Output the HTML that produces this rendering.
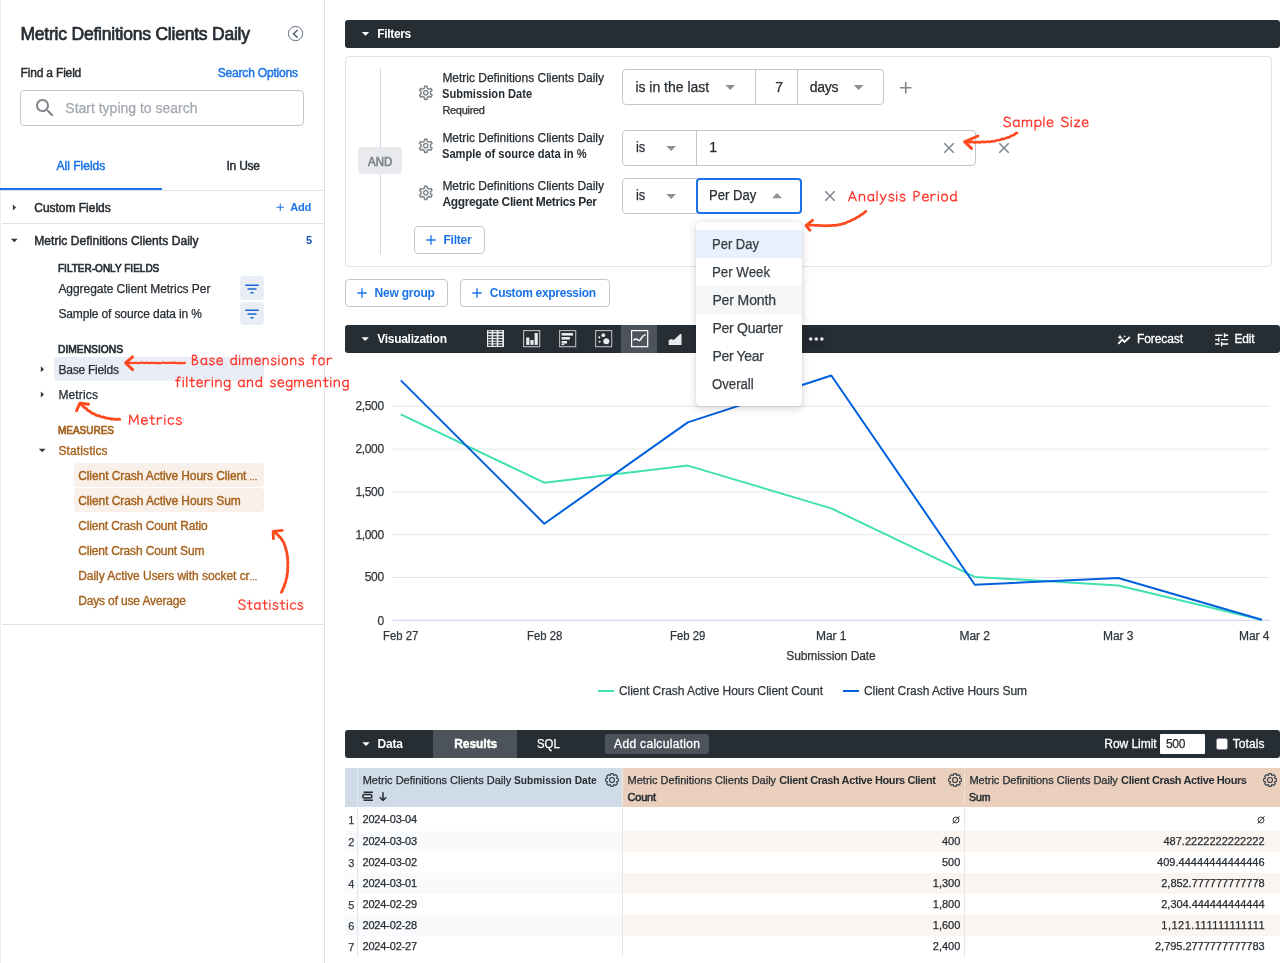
<!DOCTYPE html>
<html><head><meta charset="utf-8"><title>Explore</title>
<style>
html,body{margin:0;padding:0;}
body{width:1288px;height:963px;position:relative;overflow:hidden;background:#fff;
font-family:"Liberation Sans",sans-serif;color:#262d33;}
#root{position:absolute;left:0;top:0;width:1288px;height:963px;will-change:transform;}
.a{position:absolute;display:block;}
.t{position:absolute;white-space:nowrap;display:block;}
b{font-weight:700;}
</style></head>
<body>
<div id="root">
<div class="a" style="left:324px;top:0px;width:1px;height:963px;background:#dee1e5;"></div>
<div class="a" style="left:0px;top:0px;width:1px;height:963px;background:#eff0f2;"></div>
<span class="t" id="t1" style="top:22px;font-size:17.5px;line-height:24px;color:#262d33;-webkit-text-stroke:0.7px #262d33;left:20.50px;letter-spacing:-0.220px;">Metric Definitions Clients Daily</span>
<svg class="a" style="left:286px;top:24px;" width="20" height="20" viewBox="0 0 20 20"><circle cx="9.55" cy="9.5" r="7.1" fill="none" stroke="#5f6b7a" stroke-width="1"/><path d="M11.6 6.0 L7.5 9.8 L11.6 13.6" fill="none" stroke="#5f6b7a" stroke-width="1.6"/></svg>
<span class="t" id="t2" style="top:65px;font-size:12px;line-height:16px;color:#262d33;-webkit-text-stroke:0.45px #262d33;left:20.50px;letter-spacing:-0.173px;">Find a Field</span>
<span class="t" id="t3" style="top:65px;font-size:12px;line-height:16px;color:#1a73e8;-webkit-text-stroke:0.45px #1a73e8;left:217.80px;letter-spacing:-0.194px;">Search Options</span>
<div class="a" style="left:20px;top:90px;width:284px;height:36px;border:1px solid #c1c6cc;box-sizing:border-box;border-radius:4px;"></div>
<svg class="a" style="left:32.80px;top:96.10px;" width="24" height="24" viewBox="0 0 24 24"><path fill="#80868b" d="M15.5 14h-.79l-.28-.27C15.41 12.59 16 11.11 16 9.5 16 5.91 13.09 3 9.5 3S3 5.91 3 9.5 5.91 16 9.5 16c1.61 0 3.09-.59 4.23-1.57l.27.28v.79l5 4.99L20.49 19l-4.99-5zm-6 0C7.01 14 5 11.99 5 9.5S7.01 5 9.5 5 14 7.01 14 9.5 11.99 14 9.5 14z"/></svg>
<span class="t" id="t4" style="top:98px;font-size:14px;line-height:20px;color:#a3a8ae;-webkit-text-stroke:0.25px #a3a8ae;left:65.30px;letter-spacing:-0.005px;">Start typing to search</span>
<span class="t" id="t5" style="top:158px;font-size:12px;line-height:16px;color:#1a73e8;-webkit-text-stroke:0.45px #1a73e8;left:56.50px;letter-spacing:0.012px;">All Fields</span>
<span class="t" id="t6" style="top:158px;font-size:12px;line-height:16px;color:#262d33;-webkit-text-stroke:0.45px #262d33;left:226.50px;letter-spacing:-0.237px;">In Use</span>
<div class="a" style="left:0px;top:189.5px;width:324px;height:1.0px;background:#dee1e5;"></div>
<div class="a" style="left:0px;top:188px;width:162px;height:2.3000000000000114px;background:#1a73e8;"></div>
<svg class="a" style="left:0;top:0" width="1288" height="963"><polygon fill="#343c42" points="12.9,204.6 12.9,210.6 16.1,207.6"/></svg>
<span class="t" id="t7" style="top:200px;font-size:12px;line-height:16px;color:#262d33;-webkit-text-stroke:0.5px #262d33;left:34.30px;letter-spacing:-0.024px;">Custom Fields</span>
<svg class="a" style="left:273.55px;top:201.35px;" width="12.5" height="12.5" viewBox="0 0 24 24"><path fill="#1a73e8" d="M19 13h-6v6h-2v-6H5v-2h6V5h2v6h6v2z"/></svg>
<span class="t" id="t8" style="top:200px;font-size:11px;line-height:14px;color:#1a73e8;font-weight:700;left:290.30px;letter-spacing:-0.245px;">Add</span>
<div class="a" style="left:2px;top:223px;width:322px;height:1px;background:#dee1e5;"></div>
<svg class="a" style="left:0;top:0" width="1288" height="963"><polygon fill="#343c42" points="10.8,238.65 17.8,238.65 14.3,242.15"/></svg>
<span class="t" id="t9" style="top:233px;font-size:12px;line-height:16px;color:#262d33;-webkit-text-stroke:0.5px #262d33;left:34.30px;letter-spacing:0.073px;">Metric Definitions Clients Daily</span>
<span class="t" id="t10" style="top:233px;font-size:11px;line-height:14px;color:#1558b8;font-weight:700;left:305.94px;">5</span>
<span class="t" id="t11" style="top:261px;font-size:11px;line-height:14px;color:#262d33;-webkit-text-stroke:0.7px #262d33;left:58.40px;transform:scaleX(0.9106);transform-origin:0 0;">FILTER-ONLY FIELDS</span>
<span class="t" id="t12" style="top:281px;font-size:12px;line-height:16px;color:#262d33;-webkit-text-stroke:0.25px #262d33;left:58.40px;letter-spacing:-0.052px;">Aggregate Client Metrics Per</span>
<div class="a" style="left:240px;top:276.4px;width:24px;height:23.400000000000034px;background:#e9edf5;border-radius:4px;"></div>
<svg class="a" style="left:243.00px;top:279.50px;" width="18" height="18" viewBox="0 0 24 24"><path fill="#1967d2" d="M10 18h4v-2h-4v2zM3 6v2h18V6H3zm3 7h12v-2H6v2z"/></svg>
<span class="t" id="t13" style="top:306px;font-size:12px;line-height:16px;color:#262d33;-webkit-text-stroke:0.25px #262d33;left:58.40px;letter-spacing:-0.126px;">Sample of source data in %</span>
<div class="a" style="left:240px;top:301.6px;width:24px;height:23.399999999999977px;background:#e9edf5;border-radius:4px;"></div>
<svg class="a" style="left:243.00px;top:304.50px;" width="18" height="18" viewBox="0 0 24 24"><path fill="#1967d2" d="M10 18h4v-2h-4v2zM3 6v2h18V6H3zm3 7h12v-2H6v2z"/></svg>
<span class="t" id="t14" style="top:342px;font-size:11px;line-height:14px;color:#262d33;-webkit-text-stroke:0.7px #262d33;left:58.40px;transform:scaleX(0.9327);transform-origin:0 0;">DIMENSIONS</span>
<div class="a" style="left:54px;top:357.4px;width:210px;height:23.600000000000023px;background:#e9edf5;border-radius:4px;"></div>
<svg class="a" style="left:0;top:0" width="1288" height="963"><polygon fill="#343c42" points="40.8,366.3 40.8,372.3 44.0,369.3"/></svg>
<span class="t" id="t15" style="top:362px;font-size:12px;line-height:16px;color:#262d33;-webkit-text-stroke:0.25px #262d33;left:58.40px;letter-spacing:-0.220px;">Base Fields</span>
<svg class="a" style="left:0;top:0" width="1288" height="963"><polygon fill="#343c42" points="40.8,391.4 40.8,397.4 44.0,394.4"/></svg>
<span class="t" id="t16" style="top:387px;font-size:12px;line-height:16px;color:#262d33;-webkit-text-stroke:0.25px #262d33;left:58.40px;letter-spacing:0.155px;">Metrics</span>
<span class="t" id="t17" style="top:423px;font-size:11px;line-height:14px;color:#a5611c;-webkit-text-stroke:0.7px #a5611c;left:58.40px;transform:scaleX(0.9069);transform-origin:0 0;">MEASURES</span>
<svg class="a" style="left:0;top:0" width="1288" height="963"><polygon fill="#343c42" points="38.7,448.85 45.7,448.85 42.2,452.35"/></svg>
<span class="t" id="t18" style="top:443px;font-size:12px;line-height:16px;color:#a5611c;-webkit-text-stroke:0.35px #a5611c;left:58.40px;letter-spacing:0.132px;">Statistics</span>
<div class="a" style="left:74px;top:463.3px;width:190px;height:23.30000000000001px;background:#f9f0e9;border-radius:4px;"></div>
<div class="a" style="left:74px;top:488.2px;width:190px;height:23.400000000000034px;background:#f9f0e9;border-radius:4px;"></div>
<span class="t" id="t19" style="top:468px;font-size:12px;line-height:16px;color:#a5611c;-webkit-text-stroke:0.4px #a5611c;left:78.20px;letter-spacing:-0.081px;">Client Crash Active Hours Client <span style="font-size:8px">…</span></span>
<span class="t" id="t20" style="top:493px;font-size:12px;line-height:16px;color:#a5611c;-webkit-text-stroke:0.4px #a5611c;left:78.20px;letter-spacing:-0.076px;">Client Crash Active Hours Sum</span>
<span class="t" id="t21" style="top:518px;font-size:12px;line-height:16px;color:#a5611c;-webkit-text-stroke:0.35px #a5611c;left:78.20px;letter-spacing:-0.145px;">Client Crash Count Ratio</span>
<span class="t" id="t22" style="top:543px;font-size:12px;line-height:16px;color:#a5611c;-webkit-text-stroke:0.35px #a5611c;left:78.20px;letter-spacing:-0.147px;">Client Crash Count Sum</span>
<span class="t" id="t23" style="top:568px;font-size:12px;line-height:16px;color:#a5611c;-webkit-text-stroke:0.35px #a5611c;left:78.20px;letter-spacing:-0.040px;">Daily Active Users with socket cr<span style="font-size:8px">…</span></span>
<span class="t" id="t24" style="top:593px;font-size:12px;line-height:16px;color:#a5611c;-webkit-text-stroke:0.35px #a5611c;left:78.20px;letter-spacing:-0.151px;">Days of use Average</span>
<div class="a" style="left:2px;top:624px;width:322px;height:1px;background:#dee1e5;"></div>
<div class="a" style="left:345px;top:20px;width:935px;height:28px;background:#262d33;border-radius:3px;"></div>
<svg class="a" style="left:0;top:0" width="1288" height="963"><polygon fill="#fff" points="361.8,31.9 369.2,31.9 365.5,35.699999999999996"/></svg>
<span class="t" id="t25" style="top:26px;font-size:12px;line-height:16px;color:#fff;font-weight:700;left:377.30px;letter-spacing:-0.336px;">Filters</span>
<div class="a" style="left:345px;top:56px;width:927px;height:211px;border:1px solid #e0e3e7;box-sizing:border-box;border-radius:4px;"></div>
<div class="a" style="left:380px;top:69px;width:1px;height:184.5px;background:#d5d9de;"></div>
<div class="a" style="left:358.4px;top:147.3px;width:43.200000000000045px;height:27.099999999999994px;background:#e8eaed;border-radius:4px;"></div>
<span class="t" id="t26" style="top:154px;font-size:12px;line-height:16px;color:#80868b;-webkit-text-stroke:0.7px #80868b;left:368.00px;transform:scaleX(0.9549);transform-origin:0 0;">AND</span>
<svg class="a" style="left:417.00px;top:84.00px;" width="17.6" height="17.6" viewBox="0 0 24 24"><path fill="#80868b" d="M19.43 12.98c.04-.32.07-.64.07-.98 0-.34-.03-.66-.07-.98l2.11-1.65c.19-.15.24-.42.12-.64l-2-3.46c-.09-.16-.26-.25-.44-.25-.06 0-.12.01-.17.03l-2.49 1c-.52-.4-1.08-.73-1.69-.98l-.38-2.65C14.46 2.18 14.25 2 14 2h-4c-.25 0-.46.18-.49.42l-.38 2.65c-.61.25-1.17.59-1.69.98l-2.49-1c-.06-.02-.12-.03-.18-.03-.17 0-.34.09-.43.25l-2 3.46c-.13.22-.07.49.12.64l2.11 1.65c-.04.32-.07.65-.07.98 0 .33.03.66.07.98l-2.11 1.65c-.19.15-.24.42-.12.64l2 3.46c.09.16.26.25.44.25.06 0 .12-.01.17-.03l2.49-1c.52.4 1.08.73 1.69.98l.38 2.65c.03.24.24.42.49.42h4c.25 0 .46-.18.49-.42l.38-2.65c.61-.25 1.17-.59 1.69-.98l2.49 1c.06.02.12.03.18.03.17 0 .34-.09.43-.25l2-3.46c.12-.22.07-.49-.12-.64l-2.11-1.65zm-1.98-1.71c.04.31.05.52.05.73 0 .21-.02.43-.05.73l-.14 1.13.89.7 1.08.84-.7 1.21-1.27-.51-1.04-.42-.9.68c-.43.32-.84.56-1.25.73l-1.06.43-.16 1.13-.2 1.35h-1.4l-.19-1.35-.16-1.13-1.06-.43c-.43-.18-.83-.41-1.23-.71l-.91-.7-1.06.43-1.27.51-.7-1.21 1.08-.84.89-.7-.14-1.13c-.03-.31-.05-.54-.05-.74s.02-.43.05-.73l.14-1.13-.89-.7-1.08-.84.7-1.21 1.27.51 1.04.42.9-.68c.43-.32.84-.56 1.25-.73l1.06-.43.16-1.13.2-1.35h1.39l.19 1.35.16 1.13 1.06.43c.43.18.83.41 1.23.71l.91.7 1.06-.43 1.27-.51.7 1.21-1.07.85-.89.7.14 1.13zM12 8c-2.21 0-4 1.79-4 4s1.79 4 4 4 4-1.79 4-4-1.79-4-4-4zm0 6c-1.1 0-2-.9-2-2s.9-2 2-2 2 .9 2 2-.9 2-2 2z"/></svg>
<span class="t" id="t27" style="top:70px;font-size:12px;line-height:16px;color:#262d33;-webkit-text-stroke:0.25px #262d33;left:442.40px;letter-spacing:-0.014px;">Metric Definitions Clients Daily</span>
<span class="t" id="t28" style="top:86px;font-size:12px;line-height:16px;color:#262d33;font-weight:700;left:442.40px;transform:scaleX(0.9254);transform-origin:0 0;">Submission Date</span>
<span class="t" id="t29" style="top:103px;font-size:11px;line-height:14px;color:#262d33;-webkit-text-stroke:0.25px #262d33;left:442.40px;letter-spacing:-0.292px;">Required</span>
<div class="a" style="left:622px;top:69px;width:262px;height:36px;border:1px solid #c1c6cc;box-sizing:border-box;border-radius:4px;"></div>
<div class="a" style="left:755px;top:69px;width:1px;height:36px;background:#c1c6cc;"></div>
<div class="a" style="left:797px;top:69px;width:1px;height:36px;background:#c1c6cc;"></div>
<span class="t" id="t30" style="top:77px;font-size:14px;line-height:20px;color:#262d33;-webkit-text-stroke:0.25px #262d33;left:635.40px;letter-spacing:-0.011px;">is in the last</span>
<svg class="a" style="left:0;top:0" width="1288" height="963"><polygon fill="#8b9196" points="725.3000000000001,84.9 735.1,84.9 730.2,90.1"/></svg>
<span class="t" id="t31" style="top:77px;font-size:14px;line-height:20px;color:#262d33;-webkit-text-stroke:0.25px #262d33;left:775.30px;">7</span>
<span class="t" id="t32" style="top:77px;font-size:14px;line-height:20px;color:#262d33;-webkit-text-stroke:0.25px #262d33;left:809.80px;letter-spacing:-0.293px;">days</span>
<svg class="a" style="left:0;top:0" width="1288" height="963"><polygon fill="#8b9196" points="853.7,84.9 863.5,84.9 858.6,90.1"/></svg>
<svg class="a" style="left:896.15px;top:78.35px;" width="19.5" height="19.5" viewBox="0 0 24 24"><path fill="#80868b" d="M19 13h-6v6h-2v-6H5v-2h6V5h2v6h6v2z"/></svg>
<svg class="a" style="left:417.00px;top:136.70px;" width="17.6" height="17.6" viewBox="0 0 24 24"><path fill="#80868b" d="M19.43 12.98c.04-.32.07-.64.07-.98 0-.34-.03-.66-.07-.98l2.11-1.65c.19-.15.24-.42.12-.64l-2-3.46c-.09-.16-.26-.25-.44-.25-.06 0-.12.01-.17.03l-2.49 1c-.52-.4-1.08-.73-1.69-.98l-.38-2.65C14.46 2.18 14.25 2 14 2h-4c-.25 0-.46.18-.49.42l-.38 2.65c-.61.25-1.17.59-1.69.98l-2.49-1c-.06-.02-.12-.03-.18-.03-.17 0-.34.09-.43.25l-2 3.46c-.13.22-.07.49.12.64l2.11 1.65c-.04.32-.07.65-.07.98 0 .33.03.66.07.98l-2.11 1.65c-.19.15-.24.42-.12.64l2 3.46c.09.16.26.25.44.25.06 0 .12-.01.17-.03l2.49-1c.52.4 1.08.73 1.69.98l.38 2.65c.03.24.24.42.49.42h4c.25 0 .46-.18.49-.42l.38-2.65c.61-.25 1.17-.59 1.69-.98l2.49 1c.06.02.12.03.18.03.17 0 .34-.09.43-.25l2-3.46c.12-.22.07-.49-.12-.64l-2.11-1.65zm-1.98-1.71c.04.31.05.52.05.73 0 .21-.02.43-.05.73l-.14 1.13.89.7 1.08.84-.7 1.21-1.27-.51-1.04-.42-.9.68c-.43.32-.84.56-1.25.73l-1.06.43-.16 1.13-.2 1.35h-1.4l-.19-1.35-.16-1.13-1.06-.43c-.43-.18-.83-.41-1.23-.71l-.91-.7-1.06.43-1.27.51-.7-1.21 1.08-.84.89-.7-.14-1.13c-.03-.31-.05-.54-.05-.74s.02-.43.05-.73l.14-1.13-.89-.7-1.08-.84.7-1.21 1.27.51 1.04.42.9-.68c.43-.32.84-.56 1.25-.73l1.06-.43.16-1.13.2-1.35h1.39l.19 1.35.16 1.13 1.06.43c.43.18.83.41 1.23.71l.91.7 1.06-.43 1.27-.51.7 1.21-1.07.85-.89.7.14 1.13zM12 8c-2.21 0-4 1.79-4 4s1.79 4 4 4 4-1.79 4-4-1.79-4-4-4zm0 6c-1.1 0-2-.9-2-2s.9-2 2-2 2 .9 2 2-.9 2-2 2z"/></svg>
<span class="t" id="t33" style="top:130px;font-size:12px;line-height:16px;color:#262d33;-webkit-text-stroke:0.25px #262d33;left:442.40px;letter-spacing:-0.014px;">Metric Definitions Clients Daily</span>
<span class="t" id="t34" style="top:146px;font-size:12px;line-height:16px;color:#262d33;font-weight:700;left:442.40px;transform:scaleX(0.9266);transform-origin:0 0;">Sample of source data in %</span>
<div class="a" style="left:622px;top:130px;width:354px;height:36px;border:1px solid #c1c6cc;box-sizing:border-box;border-radius:4px;"></div>
<div class="a" style="left:696px;top:130px;width:1px;height:36px;background:#c1c6cc;"></div>
<span class="t" id="t35" style="top:137px;font-size:14px;line-height:20px;color:#262d33;-webkit-text-stroke:0.25px #262d33;left:635.80px;transform:scaleX(0.9185);transform-origin:0 0;">is</span>
<svg class="a" style="left:0;top:0" width="1288" height="963"><polygon fill="#8b9196" points="666.3000000000001,145.9 676.1,145.9 671.2,151.1"/></svg>
<span class="t" id="t36" style="top:137px;font-size:14px;line-height:20px;color:#262d33;-webkit-text-stroke:0.25px #262d33;left:709.20px;">1</span>
<svg class="a" style="left:939.90px;top:138.90px;" width="18" height="18" viewBox="0 0 24 24"><path fill="#80868b" d="M19 6.41L17.59 5 12 10.59 6.41 5 5 6.41 10.59 12 5 17.59 6.41 19 12 13.41 17.59 19 19 17.59 13.41 12z"/></svg>
<svg class="a" style="left:995.20px;top:138.90px;" width="18" height="18" viewBox="0 0 24 24"><path fill="#80868b" d="M19 6.41L17.59 5 12 10.59 6.41 5 5 6.41 10.59 12 5 17.59 6.41 19 12 13.41 17.59 19 19 17.59 13.41 12z"/></svg>
<svg class="a" style="left:417.00px;top:184.20px;" width="17.6" height="17.6" viewBox="0 0 24 24"><path fill="#80868b" d="M19.43 12.98c.04-.32.07-.64.07-.98 0-.34-.03-.66-.07-.98l2.11-1.65c.19-.15.24-.42.12-.64l-2-3.46c-.09-.16-.26-.25-.44-.25-.06 0-.12.01-.17.03l-2.49 1c-.52-.4-1.08-.73-1.69-.98l-.38-2.65C14.46 2.18 14.25 2 14 2h-4c-.25 0-.46.18-.49.42l-.38 2.65c-.61.25-1.17.59-1.69.98l-2.49-1c-.06-.02-.12-.03-.18-.03-.17 0-.34.09-.43.25l-2 3.46c-.13.22-.07.49.12.64l2.11 1.65c-.04.32-.07.65-.07.98 0 .33.03.66.07.98l-2.11 1.65c-.19.15-.24.42-.12.64l2 3.46c.09.16.26.25.44.25.06 0 .12-.01.17-.03l2.49-1c.52.4 1.08.73 1.69.98l.38 2.65c.03.24.24.42.49.42h4c.25 0 .46-.18.49-.42l.38-2.65c.61-.25 1.17-.59 1.69-.98l2.49 1c.06.02.12.03.18.03.17 0 .34-.09.43-.25l2-3.46c.12-.22.07-.49-.12-.64l-2.11-1.65zm-1.98-1.71c.04.31.05.52.05.73 0 .21-.02.43-.05.73l-.14 1.13.89.7 1.08.84-.7 1.21-1.27-.51-1.04-.42-.9.68c-.43.32-.84.56-1.25.73l-1.06.43-.16 1.13-.2 1.35h-1.4l-.19-1.35-.16-1.13-1.06-.43c-.43-.18-.83-.41-1.23-.71l-.91-.7-1.06.43-1.27.51-.7-1.21 1.08-.84.89-.7-.14-1.13c-.03-.31-.05-.54-.05-.74s.02-.43.05-.73l.14-1.13-.89-.7-1.08-.84.7-1.21 1.27.51 1.04.42.9-.68c.43-.32.84-.56 1.25-.73l1.06-.43.16-1.13.2-1.35h1.39l.19 1.35.16 1.13 1.06.43c.43.18.83.41 1.23.71l.91.7 1.06-.43 1.27-.51.7 1.21-1.07.85-.89.7.14 1.13zM12 8c-2.21 0-4 1.79-4 4s1.79 4 4 4 4-1.79 4-4-1.79-4-4-4zm0 6c-1.1 0-2-.9-2-2s.9-2 2-2 2 .9 2 2-.9 2-2 2z"/></svg>
<span class="t" id="t37" style="top:178px;font-size:12px;line-height:16px;color:#262d33;-webkit-text-stroke:0.25px #262d33;left:442.40px;letter-spacing:-0.014px;">Metric Definitions Clients Daily</span>
<span class="t" id="t38" style="top:194px;font-size:12px;line-height:16px;color:#262d33;font-weight:700;left:442.40px;letter-spacing:-0.350px;">Aggregate Client Metrics Per</span>
<div class="a" style="left:622px;top:178px;width:78px;height:36px;border:1px solid #c1c6cc;box-sizing:border-box;border-radius:4px;"></div>
<span class="t" id="t39" style="top:185px;font-size:14px;line-height:20px;color:#262d33;-webkit-text-stroke:0.25px #262d33;left:635.80px;transform:scaleX(0.9185);transform-origin:0 0;">is</span>
<svg class="a" style="left:0;top:0" width="1288" height="963"><polygon fill="#8b9196" points="666.3000000000001,193.9 676.1,193.9 671.2,199.1"/></svg>
<div class="a" style="left:696px;top:178px;width:106px;height:36px;background:#fff;border:2px solid #1a73e8;box-sizing:border-box;border-radius:4px;"></div>
<span class="t" id="t40" style="top:185px;font-size:14px;line-height:20px;color:#262d33;-webkit-text-stroke:0.25px #262d33;left:709.30px;transform:scaleX(0.9332);transform-origin:0 0;">Per Day</span>
<svg class="a" style="left:0;top:0" width="1288" height="963"><polygon fill="#8b9196" points="772.1,198.2 781.9,198.2 777,193.0"/></svg>
<svg class="a" style="left:821.00px;top:187.10px;" width="18" height="18" viewBox="0 0 24 24"><path fill="#80868b" d="M19 6.41L17.59 5 12 10.59 6.41 5 5 6.41 10.59 12 5 17.59 6.41 19 12 13.41 17.59 19 19 17.59 13.41 12z"/></svg>
<div class="a" style="left:414px;top:226px;width:71px;height:28px;border:1px solid #c1c6cc;box-sizing:border-box;border-radius:4px;"></div>
<svg class="a" style="left:423.00px;top:232.20px;" width="16" height="16" viewBox="0 0 24 24"><path fill="#1a73e8" d="M19 13h-6v6h-2v-6H5v-2h6V5h2v6h6v2z"/></svg>
<span class="t" id="t41" style="top:232px;font-size:12px;line-height:16px;color:#1a73e8;font-weight:700;left:443.40px;letter-spacing:-0.209px;">Filter</span>
<div class="a" style="left:345px;top:279px;width:103px;height:28px;border:1px solid #c1c6cc;box-sizing:border-box;border-radius:4px;"></div>
<svg class="a" style="left:353.90px;top:285.20px;" width="16" height="16" viewBox="0 0 24 24"><path fill="#1a73e8" d="M19 13h-6v6h-2v-6H5v-2h6V5h2v6h6v2z"/></svg>
<span class="t" id="t42" style="top:285px;font-size:12px;line-height:16px;color:#1a73e8;font-weight:700;left:374.50px;letter-spacing:-0.200px;">New group</span>
<div class="a" style="left:460px;top:279px;width:150px;height:28px;border:1px solid #c1c6cc;box-sizing:border-box;border-radius:4px;"></div>
<svg class="a" style="left:468.90px;top:285.20px;" width="16" height="16" viewBox="0 0 24 24"><path fill="#1a73e8" d="M19 13h-6v6h-2v-6H5v-2h6V5h2v6h6v2z"/></svg>
<span class="t" id="t43" style="top:285px;font-size:12px;line-height:16px;color:#1a73e8;font-weight:700;left:489.80px;letter-spacing:-0.317px;">Custom expression</span>
<div class="a" style="left:345px;top:325px;width:935px;height:28px;background:#262d33;border-radius:3px;"></div>
<svg class="a" style="left:0;top:0" width="1288" height="963"><polygon fill="#fff" points="361.5,337.3 368.9,337.3 365.2,341.09999999999997"/></svg>
<span class="t" id="t44" style="top:331px;font-size:12px;line-height:16px;color:#fff;font-weight:700;left:377.20px;letter-spacing:-0.278px;">Visualization</span>
<div class="a" style="left:621px;top:325px;width:36px;height:28px;background:#4c535b;"></div>
<svg class="a" style="left:487px;top:330px;" width="18" height="18" viewBox="0 0 18 18"><rect x="0" y="0" width="17" height="17" fill="#e8eaed"/><rect x="1.1" y="0.8" width="3.5" height="1.0" fill="#262d33"/><rect x="1.1" y="3.5" width="3.5" height="1.6" fill="#262d33"/><rect x="1.1" y="6.3" width="3.5" height="1.6" fill="#262d33"/><rect x="1.1" y="9.1" width="3.5" height="1.6" fill="#262d33"/><rect x="1.1" y="11.8" width="3.5" height="1.5" fill="#262d33"/><rect x="1.1" y="14.4" width="3.5" height="1.5" fill="#262d33"/><rect x="6.2" y="0.8" width="3.5" height="1.0" fill="#262d33"/><rect x="6.2" y="3.5" width="3.5" height="1.6" fill="#262d33"/><rect x="6.2" y="6.3" width="3.5" height="1.6" fill="#262d33"/><rect x="6.2" y="9.1" width="3.5" height="1.6" fill="#262d33"/><rect x="6.2" y="11.8" width="3.5" height="1.5" fill="#262d33"/><rect x="6.2" y="14.4" width="3.5" height="1.5" fill="#262d33"/><rect x="11.4" y="0.8" width="3.9" height="1.0" fill="#262d33"/><rect x="11.4" y="3.5" width="3.9" height="1.6" fill="#262d33"/><rect x="11.4" y="6.3" width="3.9" height="1.6" fill="#262d33"/><rect x="11.4" y="9.1" width="3.9" height="1.6" fill="#262d33"/><rect x="11.4" y="11.8" width="3.9" height="1.5" fill="#262d33"/><rect x="11.4" y="14.4" width="3.9" height="1.5" fill="#262d33"/></svg>
<svg class="a" style="left:522.5px;top:330px;" width="18" height="18" viewBox="0 0 18 18"><rect x="0.6" y="0.6" width="16.1" height="16.1" fill="none" stroke="#b9bdc2" stroke-width="1.1"/><rect x="3.2" y="7.5" width="3.2" height="7.4" fill="#e8eaed"/><rect x="7.4" y="10" width="3.2" height="4.9" fill="#e8eaed"/><rect x="11.6" y="3" width="3.2" height="11.9" fill="#e8eaed"/></svg>
<svg class="a" style="left:558.8px;top:330px;" width="18" height="18" viewBox="0 0 18 18"><rect x="0.6" y="0.6" width="16.1" height="16.1" fill="none" stroke="#b9bdc2" stroke-width="1.1"/><rect x="2.6" y="3.0" width="11.5" height="2.6" fill="#e8eaed"/><rect x="2.6" y="7.0" width="8.3" height="2.6" fill="#e8eaed"/><rect x="2.6" y="11.0" width="5.4" height="2.6" fill="#e8eaed"/><rect x="2.6" y="13.9" width="2.6" height="1.2" fill="#e8eaed"/></svg>
<svg class="a" style="left:594.9px;top:330px;" width="18" height="18" viewBox="0 0 18 18"><rect x="0.6" y="0.6" width="16.1" height="16.1" fill="none" stroke="#b9bdc2" stroke-width="1.1"/><circle cx="8.3" cy="5.2" r="1.9" fill="#e8eaed"/><circle cx="4.3" cy="7.4" r="1.1" fill="#e8eaed"/><circle cx="4.6" cy="11.8" r="1.0" fill="#e8eaed"/><circle cx="11.3" cy="11.2" r="3.0" fill="#e8eaed"/></svg>
<svg class="a" style="left:630.7px;top:330px;" width="18" height="18" viewBox="0 0 18 18"><rect x="0.6" y="0.6" width="16.1" height="16.1" fill="none" stroke="#fff" stroke-width="1.2"/><path d="M2.6 10.2 C4.2 8.6 5.2 8.6 6.6 9.8 C8.2 11.2 9.2 10.6 10.4 8.2 C11.6 5.8 12.8 5.2 14.6 4.6" fill="none" stroke="#fff" stroke-width="1.5"/></svg>
<svg class="a" style="left:668.4px;top:330px;" width="18" height="18" viewBox="0 0 18 18"><path d="M0.7 14.9 L0.7 10.2 L2.9 8.9 L5.8 10.0 L12.2 4.1 L13.5 4.1 L13.5 14.9 Z" fill="#e8eaed"/></svg>
<div class="a" style="left:804.5px;top:328px;width:20.5px;height:22px;background:#222930;border-radius:3px;"></div>
<svg class="a" style="left:808px;top:335px;" width="18" height="8" viewBox="0 0 18 8"><circle cx="2.7" cy="4" r="1.8" fill="#e8eaed"/><circle cx="8.3" cy="4" r="1.8" fill="#e8eaed"/><circle cx="13.9" cy="4" r="1.8" fill="#e8eaed"/></svg>
<svg class="a" style="left:1116px;top:332px;" width="16" height="16" viewBox="0 0 16 16"><path d="M2.3 11.9 L6.3 7.6 L8.5 9.9 L13.8 5.0" fill="none" stroke="#fff" stroke-width="1.8"/><path d="M4.0 2.6 L4.8 4.4 L6.6 5.2 L4.8 6.0 L4.0 7.8 L3.2 6.0 L1.4 5.2 L3.2 4.4 Z" fill="#fff"/><path d="M8.6 3.0 L9.0 4.0 L10.0 4.4 L9.0 4.8 L8.6 5.8 L8.2 4.8 L7.2 4.4 L8.2 4.0 Z" fill="#fff"/></svg>
<span class="t" id="t45" style="top:331px;font-size:12px;line-height:16px;color:#fff;-webkit-text-stroke:0.3px #fff;left:1137.00px;letter-spacing:-0.098px;">Forecast</span>
<svg class="a" style="left:1212.65px;top:330.85px;" width="17.3" height="17.3" viewBox="0 0 24 24"><path fill="#fff" d="M3 17v2h6v-2H3zM3 5v2h10V5H3zm10 16v-2h8v-2h-8v-2h-2v6h2zM7 9v2H3v2h4v2h2V9H7zm14 4v-2H11v2h10zm-6-4h2V7h4V5h-4V3h-2v6z"/></svg>
<span class="t" id="t46" style="top:331px;font-size:12px;line-height:16px;color:#fff;-webkit-text-stroke:0.3px #fff;left:1234.40px;letter-spacing:-0.163px;">Edit</span>
<svg class="a" style="left:0;top:0" width="1288" height="963"><rect x="392.3" y="577.00" width="877.7" height="1" fill="#e6e6e8"/><rect x="392.3" y="534.20" width="877.7" height="1" fill="#e6e6e8"/><rect x="392.3" y="491.40" width="877.7" height="1" fill="#e6e6e8"/><rect x="392.3" y="448.60" width="877.7" height="1" fill="#e6e6e8"/><rect x="392.3" y="405.80" width="877.7" height="1" fill="#e6e6e8"/><rect x="392.3" y="619.80" width="877.7" height="1" fill="#c6d2e8"/><polyline points="400.8,414.3 544.3,482.7 687.8,465.6 831.3,508.4 974.8,576.9 1118.3,585.5 1261.8,619.7" fill="none" stroke="#3fe1b0" stroke-width="2" stroke-linejoin="round"/><polyline points="400.8,380.4 544.3,523.7 687.8,422.4 831.3,375.5 974.8,584.7 1118.3,578.0 1261.8,619.7" fill="none" stroke="#0060e0" stroke-width="2" stroke-linejoin="round"/></svg>
<span class="t" id="t47" style="top:613px;font-size:12px;line-height:16px;color:#30363b;-webkit-text-stroke:0.25px #30363b;right:903.90px;">0</span>
<span class="t" id="t48" style="top:569px;font-size:12px;line-height:16px;color:#30363b;-webkit-text-stroke:0.25px #30363b;right:904.22px;letter-spacing:-0.316px;">500</span>
<span class="t" id="t49" style="top:527px;font-size:12px;line-height:16px;color:#30363b;-webkit-text-stroke:0.25px #30363b;right:904.23px;letter-spacing:-0.333px;">1,000</span>
<span class="t" id="t50" style="top:484px;font-size:12px;line-height:16px;color:#30363b;-webkit-text-stroke:0.25px #30363b;right:904.23px;letter-spacing:-0.333px;">1,500</span>
<span class="t" id="t51" style="top:441px;font-size:12px;line-height:16px;color:#30363b;-webkit-text-stroke:0.25px #30363b;right:904.23px;letter-spacing:-0.333px;">2,000</span>
<span class="t" id="t52" style="top:398px;font-size:12px;line-height:16px;color:#30363b;-webkit-text-stroke:0.25px #30363b;right:904.23px;letter-spacing:-0.333px;">2,500</span>
<span class="t" id="t53" style="top:628px;font-size:12px;line-height:16px;color:#30363b;-webkit-text-stroke:0.25px #30363b;left:382.12px;transform:scaleX(0.9422);transform-origin:50% 0;">Feb 27</span>
<span class="t" id="t54" style="top:628px;font-size:12px;line-height:16px;color:#30363b;-webkit-text-stroke:0.25px #30363b;left:525.62px;transform:scaleX(0.9422);transform-origin:50% 0;">Feb 28</span>
<span class="t" id="t55" style="top:628px;font-size:12px;line-height:16px;color:#30363b;-webkit-text-stroke:0.25px #30363b;left:669.12px;transform:scaleX(0.9422);transform-origin:50% 0;">Feb 29</span>
<span class="t" id="t56" style="top:628px;font-size:12px;line-height:16px;color:#30363b;-webkit-text-stroke:0.25px #30363b;left:816.05px;letter-spacing:-0.047px;">Mar 1</span>
<span class="t" id="t57" style="top:628px;font-size:12px;line-height:16px;color:#30363b;-webkit-text-stroke:0.25px #30363b;left:959.55px;letter-spacing:-0.047px;">Mar 2</span>
<span class="t" id="t58" style="top:628px;font-size:12px;line-height:16px;color:#30363b;-webkit-text-stroke:0.25px #30363b;left:1103.05px;letter-spacing:-0.047px;">Mar 3</span>
<span class="t" id="t59" style="top:628px;font-size:12px;line-height:16px;color:#30363b;-webkit-text-stroke:0.25px #30363b;right:18.55px;letter-spacing:-0.047px;">Mar 4</span>
<span class="t" id="t60" style="top:648px;font-size:12px;line-height:16px;color:#30363b;-webkit-text-stroke:0.25px #30363b;left:786.25px;letter-spacing:-0.087px;">Submission Date</span>
<div class="a" style="left:598px;top:690px;width:15.5px;height:2px;background:#3fe1b0;"></div>
<span class="t" id="t61" style="top:683px;font-size:12px;line-height:16px;color:#30363b;-webkit-text-stroke:0.25px #30363b;left:619.00px;letter-spacing:-0.057px;">Client Crash Active Hours Client Count</span>
<div class="a" style="left:843px;top:690px;width:15.5px;height:2px;background:#0060e0;"></div>
<span class="t" id="t62" style="top:683px;font-size:12px;line-height:16px;color:#30363b;-webkit-text-stroke:0.25px #30363b;left:864.00px;letter-spacing:-0.062px;">Client Crash Active Hours Sum</span>
<div class="a" style="left:345px;top:730px;width:935px;height:28px;background:#262d33;border-radius:3px;"></div>
<svg class="a" style="left:0;top:0" width="1288" height="963"><polygon fill="#fff" points="362.3,742.3000000000001 369.7,742.3000000000001 366,746.1"/></svg>
<span class="t" id="t63" style="top:736px;font-size:12px;line-height:16px;color:#fff;font-weight:700;left:377.50px;letter-spacing:-0.205px;">Data</span>
<div class="a" style="left:433px;top:730px;width:84px;height:28px;background:#4c535b;"></div>
<span class="t" id="t64" style="top:736px;font-size:12px;line-height:16px;color:#fff;font-weight:700;-webkit-text-stroke:0.4px #fff;left:454.20px;letter-spacing:-0.043px;">Results</span>
<span class="t" id="t65" style="top:736px;font-size:12px;line-height:16px;color:#fff;-webkit-text-stroke:0.25px #fff;left:536.80px;transform:scaleX(0.9452);transform-origin:0 0;">SQL</span>
<div class="a" style="left:605.3px;top:734px;width:103.70000000000005px;height:19.799999999999955px;background:#4c535b;border-radius:3px;"></div>
<span class="t" id="t66" style="top:736px;font-size:12px;line-height:16px;color:#fff;-webkit-text-stroke:0.3px #fff;left:614.10px;letter-spacing:0.322px;">Add calculation</span>
<span class="t" id="t67" style="top:736px;font-size:12px;line-height:16px;color:#fff;-webkit-text-stroke:0.3px #fff;left:1104.30px;letter-spacing:-0.048px;">Row Limit</span>
<div class="a" style="left:1160px;top:734px;width:45px;height:20px;background:#fff;border-radius:1px;"></div>
<span class="t" id="t68" style="top:736px;font-size:12px;line-height:16px;color:#262d33;-webkit-text-stroke:0.25px #262d33;left:1166.00px;letter-spacing:-0.316px;">500</span>
<div class="a" style="left:1216px;top:738px;width:12px;height:12px;background:#fff;border:1px solid #8a8796;box-sizing:border-box;border-radius:2.5px;"></div>
<span class="t" id="t69" style="top:736px;font-size:12px;line-height:16px;color:#fff;-webkit-text-stroke:0.3px #fff;left:1232.70px;letter-spacing:0.108px;">Totals</span>
<div class="a" style="left:345px;top:768px;width:12px;height:39px;background:#cfdbe7;"></div>
<div class="a" style="left:357px;top:768px;width:1px;height:39px;background:#e2e9f1;"></div>
<div class="a" style="left:358px;top:768px;width:264px;height:39px;background:#cfdbe7;"></div>
<div class="a" style="left:622px;top:768px;width:1px;height:39px;background:#efe9e6;"></div>
<div class="a" style="left:623px;top:768px;width:341px;height:39px;background:#e9cfbc;"></div>
<div class="a" style="left:964px;top:768px;width:1px;height:39px;background:#f3e3d7;"></div>
<div class="a" style="left:965px;top:768px;width:315px;height:39px;background:#e9cfbc;"></div>
<span class="t" id="t70" style="top:773px;font-size:11px;line-height:14px;color:#262d33;-webkit-text-stroke:0.25px #262d33;left:362.70px;letter-spacing:-0.002px;">Metric Definitions Clients Daily</span>
<span class="t" id="t71" style="top:773px;font-size:11px;line-height:14px;color:#262d33;font-weight:700;left:514.40px;transform:scaleX(0.9277);transform-origin:0 0;">Submission Date</span>
<span class="t" id="t72" style="top:773px;font-size:11px;line-height:14px;color:#262d33;-webkit-text-stroke:0.25px #262d33;left:627.60px;letter-spacing:-0.002px;">Metric Definitions Clients Daily</span>
<span class="t" id="t73" style="top:773px;font-size:11px;line-height:14px;color:#262d33;font-weight:700;left:779.30px;letter-spacing:-0.394px;">Client Crash Active Hours Client</span>
<span class="t" id="t74" style="top:790px;font-size:11px;line-height:14px;color:#262d33;-webkit-text-stroke:0.55px #262d33;left:627.60px;letter-spacing:-0.240px;">Count</span>
<span class="t" id="t75" style="top:773px;font-size:11px;line-height:14px;color:#262d33;-webkit-text-stroke:0.25px #262d33;left:969.40px;letter-spacing:-0.002px;">Metric Definitions Clients Daily</span>
<span class="t" id="t76" style="top:773px;font-size:11px;line-height:14px;color:#262d33;font-weight:700;left:1121.10px;letter-spacing:-0.392px;">Client Crash Active Hours</span>
<span class="t" id="t77" style="top:790px;font-size:11px;line-height:14px;color:#262d33;-webkit-text-stroke:0.55px #262d33;left:969.40px;transform:scaleX(0.9547);transform-origin:0 0;">Sum</span>
<svg class="a" style="left:602.10px;top:769.80px" width="20" height="20" viewBox="0 0 20 20"><path d="M8.37 5.27 L8.76 3.62 L11.24 3.62 L11.63 5.27 L12.19 5.51 L13.63 4.61 L15.39 6.37 L14.49 7.81 L14.73 8.37 L16.38 8.76 L16.38 11.24 L14.73 11.63 L14.49 12.19 L15.39 13.63 L13.63 15.39 L12.19 14.49 L11.63 14.73 L11.24 16.38 L8.76 16.38 L8.37 14.73 L7.81 14.49 L6.37 15.39 L4.61 13.63 L5.51 12.19 L5.27 11.63 L3.62 11.24 L3.62 8.76 L5.27 8.37 L5.51 7.81 L4.61 6.37 L6.37 4.61 L7.81 5.51 Z" fill="none" stroke="#3a444e" stroke-width="1.15" stroke-linejoin="round"/><circle cx="10" cy="10" r="2.5" fill="none" stroke="#3a444e" stroke-width="1.15"/></svg>
<svg class="a" style="left:944.50px;top:769.80px" width="20" height="20" viewBox="0 0 20 20"><path d="M8.37 5.27 L8.76 3.62 L11.24 3.62 L11.63 5.27 L12.19 5.51 L13.63 4.61 L15.39 6.37 L14.49 7.81 L14.73 8.37 L16.38 8.76 L16.38 11.24 L14.73 11.63 L14.49 12.19 L15.39 13.63 L13.63 15.39 L12.19 14.49 L11.63 14.73 L11.24 16.38 L8.76 16.38 L8.37 14.73 L7.81 14.49 L6.37 15.39 L4.61 13.63 L5.51 12.19 L5.27 11.63 L3.62 11.24 L3.62 8.76 L5.27 8.37 L5.51 7.81 L4.61 6.37 L6.37 4.61 L7.81 5.51 Z" fill="none" stroke="#3a444e" stroke-width="1.15" stroke-linejoin="round"/><circle cx="10" cy="10" r="2.5" fill="none" stroke="#3a444e" stroke-width="1.15"/></svg>
<svg class="a" style="left:1260.00px;top:769.80px" width="20" height="20" viewBox="0 0 20 20"><path d="M8.37 5.27 L8.76 3.62 L11.24 3.62 L11.63 5.27 L12.19 5.51 L13.63 4.61 L15.39 6.37 L14.49 7.81 L14.73 8.37 L16.38 8.76 L16.38 11.24 L14.73 11.63 L14.49 12.19 L15.39 13.63 L13.63 15.39 L12.19 14.49 L11.63 14.73 L11.24 16.38 L8.76 16.38 L8.37 14.73 L7.81 14.49 L6.37 15.39 L4.61 13.63 L5.51 12.19 L5.27 11.63 L3.62 11.24 L3.62 8.76 L5.27 8.37 L5.51 7.81 L4.61 6.37 L6.37 4.61 L7.81 5.51 Z" fill="none" stroke="#3a444e" stroke-width="1.15" stroke-linejoin="round"/><circle cx="10" cy="10" r="2.5" fill="none" stroke="#3a444e" stroke-width="1.15"/></svg>
<svg class="a" style="left:361px;top:790px;" width="28" height="13" viewBox="0 0 28 13"><g fill="none" stroke="#262d33" stroke-width="1.5"><path d="M2.6 2.3 H12 M2.6 10.3 H12"/><rect x="1.9" y="4.6" width="8.9" height="3.4" rx="1.2"/><path d="M22 2.2 V10.4 M18.8 7.2 L22 10.5 L25.2 7.2"/></g></svg>
<span class="t" id="t78" style="top:813px;font-size:11px;line-height:14px;color:#343c42;-webkit-text-stroke:0.25px #343c42;left:348.14px;">1</span>
<span class="t" id="t79" style="top:812px;font-size:11px;line-height:14px;color:#262d33;-webkit-text-stroke:0.25px #262d33;left:362.50px;letter-spacing:-0.187px;">2024-03-04</span>
<svg class="a" style="left:951.3px;top:814.6px;" width="10" height="10" viewBox="0 0 10 10"><circle cx="5" cy="5" r="3.0" fill="none" stroke="#30363b" stroke-width="0.95"/><path d="M1.7 8.7 L8.5 1.2" stroke="#30363b" stroke-width="0.95"/></svg>
<svg class="a" style="left:1255.7px;top:814.6px;" width="10" height="10" viewBox="0 0 10 10"><circle cx="5" cy="5" r="3.0" fill="none" stroke="#30363b" stroke-width="0.95"/><path d="M1.7 8.7 L8.5 1.2" stroke="#30363b" stroke-width="0.95"/></svg>
<div class="a" style="left:345px;top:831px;width:277px;height:21px;background:#f9fafc;"></div>
<div class="a" style="left:622px;top:831px;width:658px;height:21px;background:#faf5f1;"></div>
<span class="t" id="t80" style="top:835px;font-size:11px;line-height:14px;color:#343c42;-webkit-text-stroke:0.25px #343c42;left:348.14px;">2</span>
<span class="t" id="t81" style="top:834px;font-size:11px;line-height:14px;color:#262d33;-webkit-text-stroke:0.25px #262d33;left:362.50px;letter-spacing:-0.187px;">2024-03-03</span>
<span class="t" id="t82" style="top:834px;font-size:11px;line-height:14px;color:#262d33;-webkit-text-stroke:0.25px #262d33;right:327.70px;">400</span>
<span class="t" id="t83" style="top:834px;font-size:11px;line-height:14px;color:#262d33;-webkit-text-stroke:0.25px #262d33;right:23.38px;letter-spacing:0.015px;">487.2222222222222</span>
<span class="t" id="t84" style="top:856px;font-size:11px;line-height:14px;color:#343c42;-webkit-text-stroke:0.25px #343c42;left:348.14px;">3</span>
<span class="t" id="t85" style="top:855px;font-size:11px;line-height:14px;color:#262d33;-webkit-text-stroke:0.25px #262d33;left:362.50px;letter-spacing:-0.187px;">2024-03-02</span>
<span class="t" id="t86" style="top:855px;font-size:11px;line-height:14px;color:#262d33;-webkit-text-stroke:0.25px #262d33;right:327.70px;">500</span>
<span class="t" id="t87" style="top:855px;font-size:11px;line-height:14px;color:#262d33;-webkit-text-stroke:0.25px #262d33;right:23.37px;letter-spacing:0.032px;">409.44444444444446</span>
<div class="a" style="left:345px;top:873px;width:277px;height:21px;background:#f9fafc;"></div>
<div class="a" style="left:622px;top:873px;width:658px;height:21px;background:#faf5f1;"></div>
<span class="t" id="t88" style="top:877px;font-size:11px;line-height:14px;color:#343c42;-webkit-text-stroke:0.25px #343c42;left:348.14px;">4</span>
<span class="t" id="t89" style="top:876px;font-size:11px;line-height:14px;color:#262d33;-webkit-text-stroke:0.25px #262d33;left:362.50px;letter-spacing:-0.187px;">2024-03-01</span>
<span class="t" id="t90" style="top:876px;font-size:11px;line-height:14px;color:#262d33;-webkit-text-stroke:0.25px #262d33;right:327.70px;">1,300</span>
<span class="t" id="t91" style="top:876px;font-size:11px;line-height:14px;color:#262d33;-webkit-text-stroke:0.25px #262d33;right:23.44px;letter-spacing:-0.041px;">2,852.777777777778</span>
<span class="t" id="t92" style="top:898px;font-size:11px;line-height:14px;color:#343c42;-webkit-text-stroke:0.25px #343c42;left:348.14px;">5</span>
<span class="t" id="t93" style="top:897px;font-size:11px;line-height:14px;color:#262d33;-webkit-text-stroke:0.25px #262d33;left:362.50px;letter-spacing:-0.187px;">2024-02-29</span>
<span class="t" id="t94" style="top:897px;font-size:11px;line-height:14px;color:#262d33;-webkit-text-stroke:0.25px #262d33;right:327.70px;">1,800</span>
<span class="t" id="t95" style="top:897px;font-size:11px;line-height:14px;color:#262d33;-webkit-text-stroke:0.25px #262d33;right:23.44px;letter-spacing:-0.041px;">2,304.444444444444</span>
<div class="a" style="left:345px;top:915px;width:277px;height:21px;background:#f9fafc;"></div>
<div class="a" style="left:622px;top:915px;width:658px;height:21px;background:#faf5f1;"></div>
<span class="t" id="t96" style="top:919px;font-size:11px;line-height:14px;color:#343c42;-webkit-text-stroke:0.25px #343c42;left:348.14px;">6</span>
<span class="t" id="t97" style="top:918px;font-size:11px;line-height:14px;color:#262d33;-webkit-text-stroke:0.25px #262d33;left:362.50px;letter-spacing:-0.187px;">2024-02-28</span>
<span class="t" id="t98" style="top:918px;font-size:11px;line-height:14px;color:#262d33;-webkit-text-stroke:0.25px #262d33;right:327.70px;">1,600</span>
<span class="t" id="t99" style="top:918px;font-size:11px;line-height:14px;color:#262d33;-webkit-text-stroke:0.25px #262d33;right:22.91px;letter-spacing:0.487px;">1,121.111111111111</span>
<span class="t" id="t100" style="top:940px;font-size:11px;line-height:14px;color:#343c42;-webkit-text-stroke:0.25px #343c42;left:348.14px;">7</span>
<span class="t" id="t101" style="top:939px;font-size:11px;line-height:14px;color:#262d33;-webkit-text-stroke:0.25px #262d33;left:362.50px;letter-spacing:-0.187px;">2024-02-27</span>
<span class="t" id="t102" style="top:939px;font-size:11px;line-height:14px;color:#262d33;-webkit-text-stroke:0.25px #262d33;right:327.70px;">2,400</span>
<span class="t" id="t103" style="top:939px;font-size:11px;line-height:14px;color:#262d33;-webkit-text-stroke:0.25px #262d33;right:23.43px;letter-spacing:-0.029px;">2,795.2777777777783</span>
<div class="a" style="left:357px;top:807px;width:1px;height:150px;background:#e3e6ea;"></div>
<div class="a" style="left:622px;top:807px;width:1px;height:150px;background:#e3e6ea;"></div>
<div class="a" style="left:964px;top:807px;width:1px;height:150px;background:#ece6e1;"></div>
<div class="a" style="left:696px;top:222px;width:106px;height:183.60000000000002px;background:#fff;border-radius:4px;box-shadow:0 2px 8px rgba(0,0,0,0.18),0 0 1px rgba(0,0,0,0.25);"></div>
<div class="a" style="left:696px;top:230px;width:106px;height:27.80000000000001px;background:#e8f0fb;"></div>
<div class="a" style="left:696px;top:286px;width:106px;height:27.80000000000001px;background:#f5f6f7;"></div>
<span class="t" id="t104" style="top:234px;font-size:14px;line-height:20px;color:#343c42;-webkit-text-stroke:0.25px #343c42;left:712.40px;transform:scaleX(0.9273);transform-origin:0 0;">Per Day</span>
<span class="t" id="t105" style="top:262px;font-size:14px;line-height:20px;color:#343c42;-webkit-text-stroke:0.25px #343c42;left:712.40px;transform:scaleX(0.9491);transform-origin:0 0;">Per Week</span>
<span class="t" id="t106" style="top:290px;font-size:14px;line-height:20px;color:#343c42;-webkit-text-stroke:0.25px #343c42;left:712.40px;letter-spacing:-0.112px;">Per Month</span>
<span class="t" id="t107" style="top:318px;font-size:14px;line-height:20px;color:#343c42;-webkit-text-stroke:0.25px #343c42;left:712.40px;letter-spacing:-0.254px;">Per Quarter</span>
<span class="t" id="t108" style="top:346px;font-size:14px;line-height:20px;color:#343c42;-webkit-text-stroke:0.25px #343c42;left:712.40px;letter-spacing:-0.317px;">Per Year</span>
<span class="t" id="t109" style="top:374px;font-size:14px;line-height:20px;color:#343c42;-webkit-text-stroke:0.25px #343c42;left:712.40px;transform:scaleX(0.9400);transform-origin:0 0;">Overall</span>
<svg class="a" style="left:0;top:0" width="1288" height="963"><g fill="none" stroke="#ff3b30" stroke-linecap="round" stroke-linejoin="round"><path transform="translate(1003.40 126.55) scale(1.078 0.885)" d="M6.3 -8.9 C5.0 -11.3 0.8 -11.1 0.8 -8.0 C0.8 -5.0 6.6 -5.9 6.6 -2.6 C6.6 0.9 1.4 0.9 0.4 -1.6" vector-effect="non-scaling-stroke" stroke-width="1.35"/><path transform="translate(1012.78 126.55) scale(1.078 0.885)" d="M5.6 -5.4 C4.8 -7.9 0.5 -8.0 0.5 -3.5 C0.5 0.8 4.8 0.9 5.6 -2.4 M5.7 -7.3 L5.7 -1 Q5.8 0 6.4 -0.2" vector-effect="non-scaling-stroke" stroke-width="1.35"/><path transform="translate(1021.72 126.55) scale(1.078 0.885)" d="M0.7 -7.3 L0.7 0 M0.7 -4.8 C1.4 -7.9 4.9 -8.3 4.9 -5 L4.9 0 M4.9 -4.8 C5.6 -7.9 9.1 -8.3 9.1 -5 L9.1 0" vector-effect="non-scaling-stroke" stroke-width="1.35"/><path transform="translate(1034.33 126.55) scale(1.078 0.885)" d="M0.7 -7.3 L0.7 4 M0.7 -5 C2 -8.4 6.3 -7.9 6.3 -3.6 C6.3 0.5 2 0.9 0.7 -2.2" vector-effect="non-scaling-stroke" stroke-width="1.35"/><path transform="translate(1043.16 126.55) scale(1.078 0.885)" d="M0.7 -11 L0.7 0" vector-effect="non-scaling-stroke" stroke-width="1.35"/><path transform="translate(1046.72 126.55) scale(1.078 0.885)" d="M0.7 -3.9 L5.6 -3.9 C5.8 -8.6 0.5 -8.8 0.5 -3.6 C0.5 0.7 4.2 0.9 5.8 -1.3" vector-effect="non-scaling-stroke" stroke-width="1.35"/><path transform="translate(1061.05 126.55) scale(1.078 0.885)" d="M6.3 -8.9 C5.0 -11.3 0.8 -11.1 0.8 -8.0 C0.8 -5.0 6.6 -5.9 6.6 -2.6 C6.6 0.9 1.4 0.9 0.4 -1.6" vector-effect="non-scaling-stroke" stroke-width="1.35"/><path transform="translate(1070.43 126.55) scale(1.078 0.885)" d="M0.7 -7.2 L0.7 0 M0.7 -10.2 L0.7 -9.9" vector-effect="non-scaling-stroke" stroke-width="1.35"/><path transform="translate(1073.98 126.55) scale(1.078 0.885)" d="M0.6 -7.2 L5.2 -7.2 L0.5 -0.1 L5.4 -0.1" vector-effect="non-scaling-stroke" stroke-width="1.35"/><path transform="translate(1081.85 126.55) scale(1.078 0.885)" d="M0.7 -3.9 L5.6 -3.9 C5.8 -8.6 0.5 -8.8 0.5 -3.6 C0.5 0.7 4.2 0.9 5.8 -1.3" vector-effect="non-scaling-stroke" stroke-width="1.35"/><path transform="translate(848.20 200.85) scale(1.076 0.885)" d="M0.4 0 L3.9 -10.7 L7.4 0 M1.7 -3.5 L6.2 -3.5" vector-effect="non-scaling-stroke" stroke-width="1.35"/><path transform="translate(858.64 200.85) scale(1.076 0.885)" d="M0.7 -7.3 L0.7 0 M0.7 -4.6 C1.6 -8.0 5.5 -8.4 5.5 -4.8 L5.5 0" vector-effect="non-scaling-stroke" stroke-width="1.35"/><path transform="translate(867.36 200.85) scale(1.076 0.885)" d="M5.6 -5.4 C4.8 -7.9 0.5 -8.0 0.5 -3.5 C0.5 0.8 4.8 0.9 5.6 -2.4 M5.7 -7.3 L5.7 -1 Q5.8 0 6.4 -0.2" vector-effect="non-scaling-stroke" stroke-width="1.35"/><path transform="translate(876.29 200.85) scale(1.076 0.885)" d="M0.7 -11 L0.7 0" vector-effect="non-scaling-stroke" stroke-width="1.35"/><path transform="translate(879.84 200.85) scale(1.076 0.885)" d="M0.5 -7.3 L3.1 -0.8 M5.8 -7.3 L3.2 -0.6 C2.4 1.8 1.8 3.3 0.4 3.8" vector-effect="non-scaling-stroke" stroke-width="1.35"/><path transform="translate(888.35 200.85) scale(1.076 0.885)" d="M4.8 -6.2 C3.8 -8.0 0.8 -7.9 0.8 -5.6 C0.8 -3.4 5.0 -4.0 5.0 -1.8 C5.0 0.7 1.2 0.7 0.4 -1.2" vector-effect="non-scaling-stroke" stroke-width="1.35"/><path transform="translate(895.99 200.85) scale(1.076 0.885)" d="M0.7 -7.2 L0.7 0 M0.7 -10.2 L0.7 -9.9" vector-effect="non-scaling-stroke" stroke-width="1.35"/><path transform="translate(899.54 200.85) scale(1.076 0.885)" d="M4.8 -6.2 C3.8 -8.0 0.8 -7.9 0.8 -5.6 C0.8 -3.4 5.0 -4.0 5.0 -1.8 C5.0 0.7 1.2 0.7 0.4 -1.2" vector-effect="non-scaling-stroke" stroke-width="1.35"/><path transform="translate(913.21 200.85) scale(1.076 0.885)" d="M0.8 0 L0.8 -10.5 C7.2 -11.8 7.4 -4.4 0.8 -4.7" vector-effect="non-scaling-stroke" stroke-width="1.35"/><path transform="translate(922.14 200.85) scale(1.076 0.885)" d="M0.7 -3.9 L5.6 -3.9 C5.8 -8.6 0.5 -8.8 0.5 -3.6 C0.5 0.7 4.2 0.9 5.8 -1.3" vector-effect="non-scaling-stroke" stroke-width="1.35"/><path transform="translate(930.43 200.85) scale(1.076 0.885)" d="M0.7 -7.3 L0.7 0 M0.7 -4.4 C1.4 -7.0 3.4 -7.9 4.8 -6.9" vector-effect="non-scaling-stroke" stroke-width="1.35"/><path transform="translate(937.64 200.85) scale(1.076 0.885)" d="M0.7 -7.2 L0.7 0 M0.7 -10.2 L0.7 -9.9" vector-effect="non-scaling-stroke" stroke-width="1.35"/><path transform="translate(941.19 200.85) scale(1.076 0.885)" d="M3.1 -7.5 C-0.4 -7.5 -0.4 0.3 3.1 0.3 C6.6 0.3 6.6 -7.5 3.1 -7.5 Z" vector-effect="non-scaling-stroke" stroke-width="1.35"/><path transform="translate(949.91 200.85) scale(1.076 0.885)" d="M5.6 -5.2 C4.8 -7.8 0.5 -7.9 0.5 -3.5 C0.5 0.8 4.8 0.9 5.6 -2.4 M5.7 -11 L5.7 -1 Q5.8 0 6.4 -0.2" vector-effect="non-scaling-stroke" stroke-width="1.35"/><path transform="translate(191.70 364.65) scale(1.037 0.885)" d="M0.8 0 L0.8 -10.5 C5.6 -11.6 6.6 -6.2 1.0 -5.5 C7.8 -5.8 7.2 0.7 0.8 0" vector-effect="non-scaling-stroke" stroke-width="1.35"/><path transform="translate(200.51 364.65) scale(1.037 0.885)" d="M5.6 -5.4 C4.8 -7.9 0.5 -8.0 0.5 -3.5 C0.5 0.8 4.8 0.9 5.6 -2.4 M5.7 -7.3 L5.7 -1 Q5.8 0 6.4 -0.2" vector-effect="non-scaling-stroke" stroke-width="1.35"/><path transform="translate(209.12 364.65) scale(1.037 0.885)" d="M4.8 -6.2 C3.8 -8.0 0.8 -7.9 0.8 -5.6 C0.8 -3.4 5.0 -4.0 5.0 -1.8 C5.0 0.7 1.2 0.7 0.4 -1.2" vector-effect="non-scaling-stroke" stroke-width="1.35"/><path transform="translate(216.49 364.65) scale(1.037 0.885)" d="M0.7 -3.9 L5.6 -3.9 C5.8 -8.6 0.5 -8.8 0.5 -3.6 C0.5 0.7 4.2 0.9 5.8 -1.3" vector-effect="non-scaling-stroke" stroke-width="1.35"/><path transform="translate(230.28 364.65) scale(1.037 0.885)" d="M5.6 -5.2 C4.8 -7.8 0.5 -7.9 0.5 -3.5 C0.5 0.8 4.8 0.9 5.6 -2.4 M5.7 -11 L5.7 -1 Q5.8 0 6.4 -0.2" vector-effect="non-scaling-stroke" stroke-width="1.35"/><path transform="translate(238.89 364.65) scale(1.037 0.885)" d="M0.7 -7.2 L0.7 0 M0.7 -10.2 L0.7 -9.9" vector-effect="non-scaling-stroke" stroke-width="1.35"/><path transform="translate(242.31 364.65) scale(1.037 0.885)" d="M0.7 -7.3 L0.7 0 M0.7 -4.8 C1.4 -7.9 4.9 -8.3 4.9 -5 L4.9 0 M4.9 -4.8 C5.6 -7.9 9.1 -8.3 9.1 -5 L9.1 0" vector-effect="non-scaling-stroke" stroke-width="1.35"/><path transform="translate(254.44 364.65) scale(1.037 0.885)" d="M0.7 -3.9 L5.6 -3.9 C5.8 -8.6 0.5 -8.8 0.5 -3.6 C0.5 0.7 4.2 0.9 5.8 -1.3" vector-effect="non-scaling-stroke" stroke-width="1.35"/><path transform="translate(262.43 364.65) scale(1.037 0.885)" d="M0.7 -7.3 L0.7 0 M0.7 -4.6 C1.6 -8.0 5.5 -8.4 5.5 -4.8 L5.5 0" vector-effect="non-scaling-stroke" stroke-width="1.35"/><path transform="translate(270.83 364.65) scale(1.037 0.885)" d="M4.8 -6.2 C3.8 -8.0 0.8 -7.9 0.8 -5.6 C0.8 -3.4 5.0 -4.0 5.0 -1.8 C5.0 0.7 1.2 0.7 0.4 -1.2" vector-effect="non-scaling-stroke" stroke-width="1.35"/><path transform="translate(278.19 364.65) scale(1.037 0.885)" d="M0.7 -7.2 L0.7 0 M0.7 -10.2 L0.7 -9.9" vector-effect="non-scaling-stroke" stroke-width="1.35"/><path transform="translate(281.61 364.65) scale(1.037 0.885)" d="M3.1 -7.5 C-0.4 -7.5 -0.4 0.3 3.1 0.3 C6.6 0.3 6.6 -7.5 3.1 -7.5 Z" vector-effect="non-scaling-stroke" stroke-width="1.35"/><path transform="translate(290.01 364.65) scale(1.037 0.885)" d="M0.7 -7.3 L0.7 0 M0.7 -4.6 C1.6 -8.0 5.5 -8.4 5.5 -4.8 L5.5 0" vector-effect="non-scaling-stroke" stroke-width="1.35"/><path transform="translate(298.41 364.65) scale(1.037 0.885)" d="M4.8 -6.2 C3.8 -8.0 0.8 -7.9 0.8 -5.6 C0.8 -3.4 5.0 -4.0 5.0 -1.8 C5.0 0.7 1.2 0.7 0.4 -1.2" vector-effect="non-scaling-stroke" stroke-width="1.35"/><path transform="translate(311.58 364.65) scale(1.037 0.885)" d="M4.6 -10.4 C2.6 -11.6 1.8 -10.2 1.8 -8.2 L1.8 0 M0.2 -6.9 L4.0 -6.9" vector-effect="non-scaling-stroke" stroke-width="1.35"/><path transform="translate(318.32 364.65) scale(1.037 0.885)" d="M3.1 -7.5 C-0.4 -7.5 -0.4 0.3 3.1 0.3 C6.6 0.3 6.6 -7.5 3.1 -7.5 Z" vector-effect="non-scaling-stroke" stroke-width="1.35"/><path transform="translate(326.72 364.65) scale(1.037 0.885)" d="M0.7 -7.3 L0.7 0 M0.7 -4.4 C1.4 -7.0 3.4 -7.9 4.8 -6.9" vector-effect="non-scaling-stroke" stroke-width="1.35"/><path transform="translate(175.60 386.65) scale(1.060 0.885)" d="M4.6 -10.4 C2.6 -11.6 1.8 -10.2 1.8 -8.2 L1.8 0 M0.2 -6.9 L4.0 -6.9" vector-effect="non-scaling-stroke" stroke-width="1.35"/><path transform="translate(182.49 386.65) scale(1.060 0.885)" d="M0.7 -7.2 L0.7 0 M0.7 -10.2 L0.7 -9.9" vector-effect="non-scaling-stroke" stroke-width="1.35"/><path transform="translate(185.99 386.65) scale(1.060 0.885)" d="M0.7 -11 L0.7 0" vector-effect="non-scaling-stroke" stroke-width="1.35"/><path transform="translate(189.49 386.65) scale(1.060 0.885)" d="M2.1 -10 L2.1 -1.4 C2.1 0.1 3.4 0.3 4.4 -0.2 M0.2 -6.9 L4.6 -6.9" vector-effect="non-scaling-stroke" stroke-width="1.35"/><path transform="translate(196.38 386.65) scale(1.060 0.885)" d="M0.7 -3.9 L5.6 -3.9 C5.8 -8.6 0.5 -8.8 0.5 -3.6 C0.5 0.7 4.2 0.9 5.8 -1.3" vector-effect="non-scaling-stroke" stroke-width="1.35"/><path transform="translate(204.54 386.65) scale(1.060 0.885)" d="M0.7 -7.3 L0.7 0 M0.7 -4.4 C1.4 -7.0 3.4 -7.9 4.8 -6.9" vector-effect="non-scaling-stroke" stroke-width="1.35"/><path transform="translate(211.64 386.65) scale(1.060 0.885)" d="M0.7 -7.2 L0.7 0 M0.7 -10.2 L0.7 -9.9" vector-effect="non-scaling-stroke" stroke-width="1.35"/><path transform="translate(215.14 386.65) scale(1.060 0.885)" d="M0.7 -7.3 L0.7 0 M0.7 -4.6 C1.6 -8.0 5.5 -8.4 5.5 -4.8 L5.5 0" vector-effect="non-scaling-stroke" stroke-width="1.35"/><path transform="translate(223.73 386.65) scale(1.060 0.885)" d="M5.6 -5.4 C4.8 -7.9 0.5 -8.0 0.5 -3.5 C0.5 0.8 4.8 0.9 5.6 -2.4 M5.7 -7.3 L5.7 1.6 C5.7 4.6 1.8 4.6 0.8 2.9" vector-effect="non-scaling-stroke" stroke-width="1.35"/><path transform="translate(237.94 386.65) scale(1.060 0.885)" d="M5.6 -5.4 C4.8 -7.9 0.5 -8.0 0.5 -3.5 C0.5 0.8 4.8 0.9 5.6 -2.4 M5.7 -7.3 L5.7 -1 Q5.8 0 6.4 -0.2" vector-effect="non-scaling-stroke" stroke-width="1.35"/><path transform="translate(246.73 386.65) scale(1.060 0.885)" d="M0.7 -7.3 L0.7 0 M0.7 -4.6 C1.6 -8.0 5.5 -8.4 5.5 -4.8 L5.5 0" vector-effect="non-scaling-stroke" stroke-width="1.35"/><path transform="translate(255.32 386.65) scale(1.060 0.885)" d="M5.6 -5.2 C4.8 -7.8 0.5 -7.9 0.5 -3.5 C0.5 0.8 4.8 0.9 5.6 -2.4 M5.7 -11 L5.7 -1 Q5.8 0 6.4 -0.2" vector-effect="non-scaling-stroke" stroke-width="1.35"/><path transform="translate(270.06 386.65) scale(1.060 0.885)" d="M4.8 -6.2 C3.8 -8.0 0.8 -7.9 0.8 -5.6 C0.8 -3.4 5.0 -4.0 5.0 -1.8 C5.0 0.7 1.2 0.7 0.4 -1.2" vector-effect="non-scaling-stroke" stroke-width="1.35"/><path transform="translate(277.58 386.65) scale(1.060 0.885)" d="M0.7 -3.9 L5.6 -3.9 C5.8 -8.6 0.5 -8.8 0.5 -3.6 C0.5 0.7 4.2 0.9 5.8 -1.3" vector-effect="non-scaling-stroke" stroke-width="1.35"/><path transform="translate(285.75 386.65) scale(1.060 0.885)" d="M5.6 -5.4 C4.8 -7.9 0.5 -8.0 0.5 -3.5 C0.5 0.8 4.8 0.9 5.6 -2.4 M5.7 -7.3 L5.7 1.6 C5.7 4.6 1.8 4.6 0.8 2.9" vector-effect="non-scaling-stroke" stroke-width="1.35"/><path transform="translate(294.02 386.65) scale(1.060 0.885)" d="M0.7 -7.3 L0.7 0 M0.7 -4.8 C1.4 -7.9 4.9 -8.3 4.9 -5 L4.9 0 M4.9 -4.8 C5.6 -7.9 9.1 -8.3 9.1 -5 L9.1 0" vector-effect="non-scaling-stroke" stroke-width="1.35"/><path transform="translate(306.42 386.65) scale(1.060 0.885)" d="M0.7 -3.9 L5.6 -3.9 C5.8 -8.6 0.5 -8.8 0.5 -3.6 C0.5 0.7 4.2 0.9 5.8 -1.3" vector-effect="non-scaling-stroke" stroke-width="1.35"/><path transform="translate(314.58 386.65) scale(1.060 0.885)" d="M0.7 -7.3 L0.7 0 M0.7 -4.6 C1.6 -8.0 5.5 -8.4 5.5 -4.8 L5.5 0" vector-effect="non-scaling-stroke" stroke-width="1.35"/><path transform="translate(323.17 386.65) scale(1.060 0.885)" d="M2.1 -10 L2.1 -1.4 C2.1 0.1 3.4 0.3 4.4 -0.2 M0.2 -6.9 L4.6 -6.9" vector-effect="non-scaling-stroke" stroke-width="1.35"/><path transform="translate(330.06 386.65) scale(1.060 0.885)" d="M0.7 -7.2 L0.7 0 M0.7 -10.2 L0.7 -9.9" vector-effect="non-scaling-stroke" stroke-width="1.35"/><path transform="translate(333.56 386.65) scale(1.060 0.885)" d="M0.7 -7.3 L0.7 0 M0.7 -4.6 C1.6 -8.0 5.5 -8.4 5.5 -4.8 L5.5 0" vector-effect="non-scaling-stroke" stroke-width="1.35"/><path transform="translate(342.15 386.65) scale(1.060 0.885)" d="M5.6 -5.4 C4.8 -7.9 0.5 -8.0 0.5 -3.5 C0.5 0.8 4.8 0.9 5.6 -2.4 M5.7 -7.3 L5.7 1.6 C5.7 4.6 1.8 4.6 0.8 2.9" vector-effect="non-scaling-stroke" stroke-width="1.35"/><path transform="translate(128.70 424.25) scale(1.105 0.885)" d="M0.7 0 L1.2 -10.5 L4.6 -2.6 L8.0 -10.5 L8.6 0" vector-effect="non-scaling-stroke" stroke-width="1.35"/><path transform="translate(140.96 424.25) scale(1.105 0.885)" d="M0.7 -3.9 L5.6 -3.9 C5.8 -8.6 0.5 -8.8 0.5 -3.6 C0.5 0.7 4.2 0.9 5.8 -1.3" vector-effect="non-scaling-stroke" stroke-width="1.35"/><path transform="translate(149.47 424.25) scale(1.105 0.885)" d="M2.1 -10 L2.1 -1.4 C2.1 0.1 3.4 0.3 4.4 -0.2 M0.2 -6.9 L4.6 -6.9" vector-effect="non-scaling-stroke" stroke-width="1.35"/><path transform="translate(156.65 424.25) scale(1.105 0.885)" d="M0.7 -7.3 L0.7 0 M0.7 -4.4 C1.4 -7.0 3.4 -7.9 4.8 -6.9" vector-effect="non-scaling-stroke" stroke-width="1.35"/><path transform="translate(164.05 424.25) scale(1.105 0.885)" d="M0.7 -7.2 L0.7 0 M0.7 -10.2 L0.7 -9.9" vector-effect="non-scaling-stroke" stroke-width="1.35"/><path transform="translate(167.69 424.25) scale(1.105 0.885)" d="M5.2 -6.0 C4.0 -8.0 0.5 -7.8 0.5 -3.6 C0.5 0.6 4.0 0.8 5.4 -1.3" vector-effect="non-scaling-stroke" stroke-width="1.35"/><path transform="translate(175.76 424.25) scale(1.105 0.885)" d="M4.8 -6.2 C3.8 -8.0 0.8 -7.9 0.8 -5.6 C0.8 -3.4 5.0 -4.0 5.0 -1.8 C5.0 0.7 1.2 0.7 0.4 -1.2" vector-effect="non-scaling-stroke" stroke-width="1.35"/><path transform="translate(238.30 609.25) scale(1.030 0.885)" d="M6.3 -8.9 C5.0 -11.3 0.8 -11.1 0.8 -8.0 C0.8 -5.0 6.6 -5.9 6.6 -2.6 C6.6 0.9 1.4 0.9 0.4 -1.6" vector-effect="non-scaling-stroke" stroke-width="1.35"/><path transform="translate(247.26 609.25) scale(1.030 0.885)" d="M2.1 -10 L2.1 -1.4 C2.1 0.1 3.4 0.3 4.4 -0.2 M0.2 -6.9 L4.6 -6.9" vector-effect="non-scaling-stroke" stroke-width="1.35"/><path transform="translate(253.96 609.25) scale(1.030 0.885)" d="M5.6 -5.4 C4.8 -7.9 0.5 -8.0 0.5 -3.5 C0.5 0.8 4.8 0.9 5.6 -2.4 M5.7 -7.3 L5.7 -1 Q5.8 0 6.4 -0.2" vector-effect="non-scaling-stroke" stroke-width="1.35"/><path transform="translate(262.51 609.25) scale(1.030 0.885)" d="M2.1 -10 L2.1 -1.4 C2.1 0.1 3.4 0.3 4.4 -0.2 M0.2 -6.9 L4.6 -6.9" vector-effect="non-scaling-stroke" stroke-width="1.35"/><path transform="translate(269.21 609.25) scale(1.030 0.885)" d="M0.7 -7.2 L0.7 0 M0.7 -10.2 L0.7 -9.9" vector-effect="non-scaling-stroke" stroke-width="1.35"/><path transform="translate(272.61 609.25) scale(1.030 0.885)" d="M4.8 -6.2 C3.8 -8.0 0.8 -7.9 0.8 -5.6 C0.8 -3.4 5.0 -4.0 5.0 -1.8 C5.0 0.7 1.2 0.7 0.4 -1.2" vector-effect="non-scaling-stroke" stroke-width="1.35"/><path transform="translate(279.92 609.25) scale(1.030 0.885)" d="M2.1 -10 L2.1 -1.4 C2.1 0.1 3.4 0.3 4.4 -0.2 M0.2 -6.9 L4.6 -6.9" vector-effect="non-scaling-stroke" stroke-width="1.35"/><path transform="translate(286.62 609.25) scale(1.030 0.885)" d="M0.7 -7.2 L0.7 0 M0.7 -10.2 L0.7 -9.9" vector-effect="non-scaling-stroke" stroke-width="1.35"/><path transform="translate(290.02 609.25) scale(1.030 0.885)" d="M5.2 -6.0 C4.0 -8.0 0.5 -7.8 0.5 -3.6 C0.5 0.6 4.0 0.8 5.4 -1.3" vector-effect="non-scaling-stroke" stroke-width="1.35"/><path transform="translate(297.54 609.25) scale(1.030 0.885)" d="M4.8 -6.2 C3.8 -8.0 0.8 -7.9 0.8 -5.6 C0.8 -3.4 5.0 -4.0 5.0 -1.8 C5.0 0.7 1.2 0.7 0.4 -1.2" vector-effect="non-scaling-stroke" stroke-width="1.35"/></g><g fill="none" stroke="#ff4a1f" stroke-width="2.9" stroke-linecap="round" stroke-linejoin="round"><path d="M1017.00 133.00 L1015.68 133.34 L1014.76 134.36 L1013.66 135.07 L1012.41 135.47 L1011.19 135.89 L1010.13 136.67 L1009.03 137.38 L1007.67 137.40 L1006.48 137.85 L1005.32 138.39 L1004.16 138.95 L1002.82 138.89 L1001.58 139.14 L1000.45 139.83 L999.21 140.09 L997.94 140.20 L996.67 140.27 L995.53 141.01 L994.27 141.19 L992.99 141.12 L991.74 141.28 L990.52 141.69 L989.28 141.96 L987.98 141.57 L987.98 141.57 L986.99 141.67 L986.00 141.94 L985.01 142.08 L984.01 142.14 L983.01 141.86 L982.01 141.74 L981.04 142.15 L980.06 142.37 L979.08 142.23 L978.11 142.13 L977.14 142.01 L976.19 142.13 L975.23 142.51 L974.29 142.45 L973.37 142.06 L972.45 141.97 L971.53 142.04 L970.63 142.12 L969.73 142.25 L968.86 142.10 L968.02 141.67 L967.17 141.55 L966.32 141.77 L965.49 141.90" stroke-width="2.6"/><path d="M978 136 L964.5 141.8 L971.5 148.4"/><path d="M866.00 211.40 L864.85 211.97 L863.97 212.92 L862.98 213.75 L861.84 214.38 L860.70 215.02 L859.69 215.87 L858.66 216.71 L857.37 217.13 L856.24 217.81 L855.12 218.54 L853.99 219.25 L852.67 219.57 L851.51 220.22 L850.38 220.95 L849.15 221.45 L847.87 221.81 L846.68 222.37 L845.54 223.09 L844.24 223.33 L842.98 223.67 L841.75 224.10 L840.55 224.64 L839.24 224.70 L837.97 224.85 L837.98 224.85 L836.74 225.17 L835.47 225.37 L834.16 225.36 L832.84 225.27 L831.54 225.66 L830.21 225.69 L828.86 225.61 L827.52 225.56 L826.17 225.86 L824.82 225.76 L823.47 225.54 L822.13 225.59 L820.78 225.69 L819.45 225.52 L818.14 225.23 L816.81 225.42 L815.51 225.39 L814.24 225.26 L812.98 225.03 L811.72 225.23 L810.50 225.30 L809.31 225.06 L808.14 224.98 L807.00 224.99" stroke-width="2.7"/><path d="M812.5 220.4 L806 225.6 L810 230.2"/><path d="M185.00 362.90 L182.51 363.15 L180.04 362.80 L177.59 363.27 L175.15 362.57 L172.72 362.95 L170.31 362.89 L167.91 362.75 L165.52 362.98 L163.13 362.47 L160.75 363.23 L158.38 362.80 L156.00 363.16 L153.62 362.84 L151.25 362.87 L148.87 363.19 L146.48 362.66 L144.09 363.05 L141.69 362.45 L139.28 363.06 L136.85 362.86 L134.41 362.76 L131.96 363.03 L129.49 362.67 L127.00 363.35" stroke-width="2.2"/><path d="M132.6 356.8 L125.6 362.9 L132.6 369.6"/><path d="M119.80 419.40 L118.35 418.98 L116.88 419.46 L115.45 419.31 L114.06 419.02 L112.68 418.85 L111.25 419.19 L109.94 418.67 L108.65 418.28 L107.31 418.19 L105.99 418.15 L104.78 417.58 L103.61 417.00 L102.29 417.08 L101.08 416.76 L99.94 416.28 L98.88 415.64 L97.63 415.55 L96.42 415.37 L95.45 414.62 L94.43 414.06 L93.38 413.59 L92.22 413.36 L91.26 412.75 L90.53 411.78 L90.54 411.79 L90.00 411.42 L89.38 411.17 L88.79 410.89 L88.25 410.56 L87.72 410.22 L87.23 409.85 L86.83 409.36 L86.51 408.81 L86.13 408.35 L85.62 408.07 L85.02 407.91 L84.46 407.70 L84.02 407.38 L83.67 406.97 L83.34 406.56 L83.00 406.17 L82.67 405.79 L82.36 405.41 L82.05 405.04 L81.70 404.74 L81.29 404.52 L80.84 404.34 L80.43 404.14 L80.11 403.87" stroke-width="2.8"/><path d="M76.6 410.8 L79.8 403.2 L88.6 404.2"/><path d="M281.20 592.20 L281.90 591.45 L282.33 590.51 L282.57 589.48 L283.05 588.56 L283.57 587.64 L284.05 586.69 L284.41 585.67 L284.53 584.56 L284.95 583.55 L285.50 582.56 L285.76 581.48 L285.98 580.37 L286.12 579.24 L286.53 578.17 L286.97 577.08 L286.96 575.91 L287.05 574.75 L287.25 573.61 L287.54 572.47 L287.66 571.30 L287.45 570.11 L287.60 568.94 L287.81 567.78 L287.85 566.60 L287.85 566.60 L287.71 565.28 L287.63 563.98 L287.94 562.68 L287.80 561.41 L287.63 560.16 L287.51 558.92 L287.62 557.68 L287.52 556.47 L287.08 555.32 L286.96 554.16 L286.86 553.01 L286.73 551.88 L286.37 550.82 L285.91 549.81 L285.83 548.73 L285.68 547.68 L285.32 546.72 L284.93 545.80 L284.48 544.93 L284.19 544.01 L284.04 543.06 L283.63 542.24 L283.04 541.54 L282.55 540.83 L282.55 540.83 L282.23 540.33 L281.92 539.84 L281.62 539.34 L281.36 538.82 L281.08 538.32 L280.72 537.88 L280.26 537.53 L279.79 537.22 L279.38 536.86 L279.06 536.43 L278.78 535.98 L278.48 535.55 L278.15 535.15 L277.80 534.79 L277.44 534.43 L277.07 534.10 L276.68 533.81 L276.26 533.57 L275.84 533.33 L275.47 533.06 L275.16 532.72 L274.88 532.35 L274.60 531.98 L274.30 531.67" stroke-width="2.8"/><path d="M282.2 530.4 L273.2 531.4 L273.4 538.6"/></g></svg>
</div>
</body></html>
